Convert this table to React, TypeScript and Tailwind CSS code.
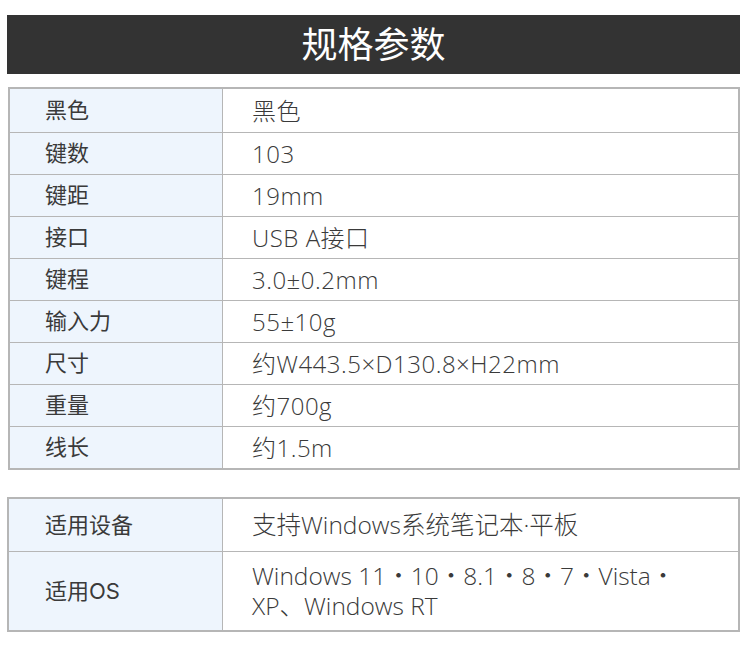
import React from 'react';

const specs: [string, string][] = [
  ['黑色', '黑色'],
  ['键数', '103'],
  ['键距', '19mm'],
  ['接口', 'USB A接口'],
  ['键程', '3.0±0.2mm'],
  ['输入力', '55±10g'],
  ['尺寸', '约W443.5×D130.8×H22mm'],
  ['重量', '约700g'],
  ['线长', '约1.5m'],
];

const font = { fontFamily: 'Inter, "Noto Sans CJK SC", sans-serif' };
const valueFont = { fontFamily: '"Open Sans", "Noto Sans CJK SC", sans-serif' };

export default function App() {
  return (
    <div className="w-[750px] h-[654px] bg-white pt-[15px] text-[#333]" style={font}>
      {/* Title bar */}
      <div className="ml-[7px] w-[733px] h-[59px] bg-[#333333] flex items-center justify-center">
        <h1 className="text-white text-[36px] font-normal leading-none">规格参数</h1>
      </div>

      {/* Main spec table */}
      <div className="ml-[8px] mt-[13px] w-[732px] border-2 border-[#b6b6b6]">
        {specs.map(([label, value], i) => (
          <div
            key={label + i}
            className={`flex ${i === 0 ? 'h-[43px]' : 'h-[42px] border-t border-[#b6b6b6]'}`}
          >
            <div className="w-[213px] shrink-0 bg-[#eef5fd] border-r border-[#b6b6b6] flex items-center pl-[35px] text-[22px] text-[#3a3a3a]">
              {label}
            </div>
            <div
              className="flex-1 flex items-center pl-[29px] text-[24px] font-light tracking-[0.5px] text-[#3a3a3a]"
              style={valueFont}
            >
              {value}
            </div>
          </div>
        ))}
      </div>

      {/* Compatibility table */}
      <div className="ml-[7px] mt-[27px] w-[733px] border-2 border-[#b6b6b6]">
        <div className="flex h-[52px]">
          <div className="w-[214px] shrink-0 bg-[#eef5fd] border-r border-[#b6b6b6] flex items-center pl-[36px] text-[22px] text-[#3a3a3a]">
            适用设备
          </div>
          <div
            className="flex-1 flex items-center pl-[29px] text-[24.5px] font-light text-[#3a3a3a]"
            style={valueFont}
          >
            支持Windows系统笔记本·平板
          </div>
        </div>
        <div className="flex h-[79px] border-t border-[#b6b6b6]">
          <div className="w-[214px] shrink-0 bg-[#eef5fd] border-r border-[#b6b6b6] flex items-center pl-[36px] text-[22px] text-[#3a3a3a]">
            适用OS
          </div>
          <div
            className="flex-1 flex items-center pl-[29px] text-[24.5px] font-light leading-[30px] text-[#3a3a3a]"
            style={valueFont}
          >
            <p>
              Windows 11・10・8.1・8・7・Vista・
              <br />
              XP、Windows RT
            </p>
          </div>
        </div>
      </div>
    </div>
  );
}
